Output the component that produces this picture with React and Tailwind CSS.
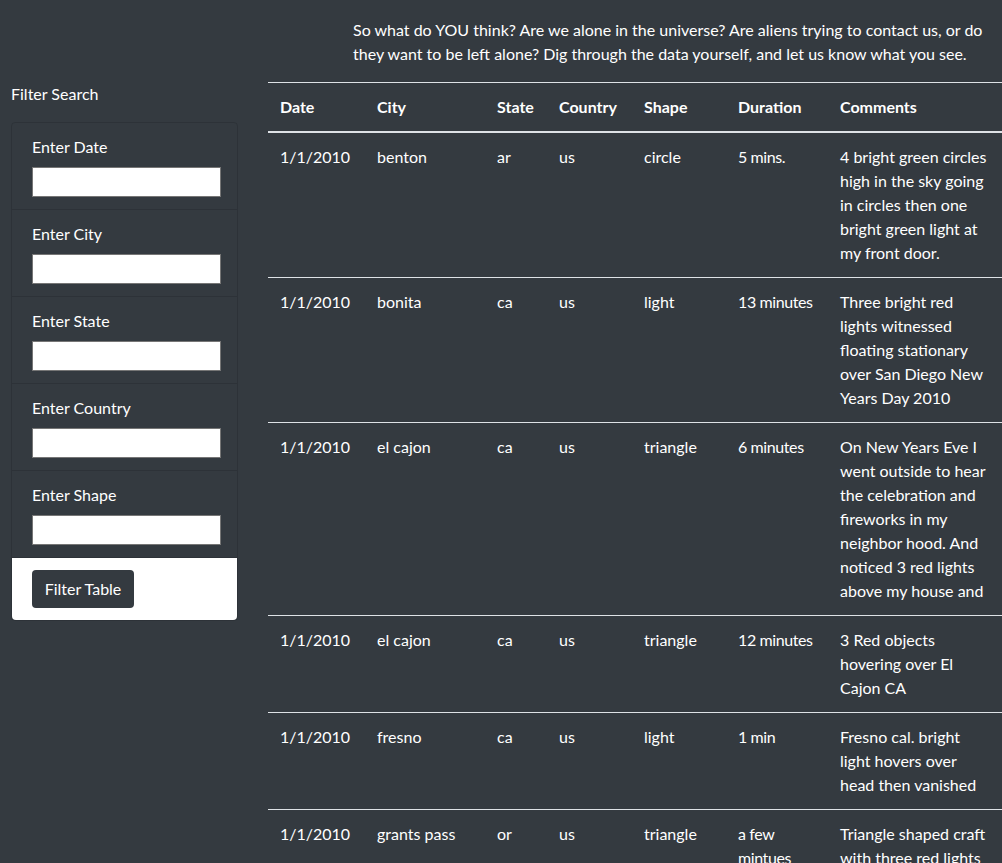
import React from "react";

const rows = [
  ["1/1/2010", "benton", "ar", "us", "circle", "5 mins.", "4 bright green circles high in the sky going in circles then one bright green light at my front door."],
  ["1/1/2010", "bonita", "ca", "us", "light", "13 minutes", "Three bright red lights witnessed floating stationary over San Diego New Years Day 2010"],
  ["1/1/2010", "el cajon", "ca", "us", "triangle", "6 minutes", "On New Years Eve I went outside to hear the celebration and fireworks in my neighbor hood. And noticed 3 red lights above my house and"],
  ["1/1/2010", "el cajon", "ca", "us", "triangle", "12 minutes", "3 Red objects hovering over El Cajon CA"],
  ["1/1/2010", "fresno", "ca", "us", "light", "1 min", "Fresno cal. bright light hovers over head then vanished"],
  ["1/1/2010", "grants pass", "or", "us", "triangle", "a few mintues", "Triangle shaped craft with three red lights moving slowly to the east"],
];

const filters = ["Enter Date", "Enter City", "Enter State", "Enter Country", "Enter Shape"];
const headers = ["Date", "City", "State", "Country", "Shape", "Duration", "Comments"];

export default function App() {
  return (
    <div
      className="h-screen w-full overflow-hidden bg-[#343a40] text-white text-[16px] leading-6"
      style={{ fontFamily: "Lato, 'Open Sans', sans-serif" }}
    >
      <div className="flex">
        <aside className="w-[238px] shrink-0 pl-[11px] pt-[82px]">
          <h5 className="text-[16px] leading-6">Filter Search</h5>
          <div className="mt-4 w-[227px] rounded border border-black/[0.125]">
            {filters.map((f) => (
              <div key={f} className="border-b border-black/[0.125] px-5 pt-3 pb-3">
                <label className="block">{f}</label>
                <input
                  type="text"
                  className="mt-2 block h-[30px] w-[189px] border border-[#767676] bg-white text-black"
                />
              </div>
            ))}
            <div className="rounded-b bg-white px-5 py-3">
              <button className="h-[38px] w-[102px] rounded bg-[#343a40] text-white">Filter Table</button>
            </div>
          </div>
        </aside>
        <main className="ml-[30px] w-[734px] shrink-0">
          <p className="mt-[18px] mb-4 pl-[85px]">
            So what do YOU think? Are we alone in the universe? Are aliens trying to contact us, or do they want to be left alone? Dig through the data yourself, and let us know what you see.
          </p>
          <table className="w-[734px] table-fixed border-collapse">
            <colgroup>
              <col className="w-[97px]" />
              <col className="w-[120px]" />
              <col className="w-[62px]" />
              <col className="w-[85px]" />
              <col className="w-[94px]" />
              <col className="w-[102px]" />
              <col className="w-[174px]" />
            </colgroup>
            <thead>
              <tr>
                {headers.map((h) => (
                  <th
                    key={h}
                    className="border-t border-b-2 border-[#dee2e6] p-3 text-left align-bottom font-bold"
                  >
                    {h}
                  </th>
                ))}
              </tr>
            </thead>
            <tbody>
              {rows.map((r, i) => (
                <tr key={i}>
                  {r.map((c, j) => (
                    <td
                      key={j}
                      className={
                        j === 5
                          ? "border-t border-[#dee2e6] p-3 align-top tracking-[-0.4px]"
                          : "border-t border-[#dee2e6] p-3 align-top"
                      }
                    >
                      {c}
                    </td>
                  ))}
                </tr>
              ))}
            </tbody>
          </table>
        </main>
      </div>
    </div>
  );
}
